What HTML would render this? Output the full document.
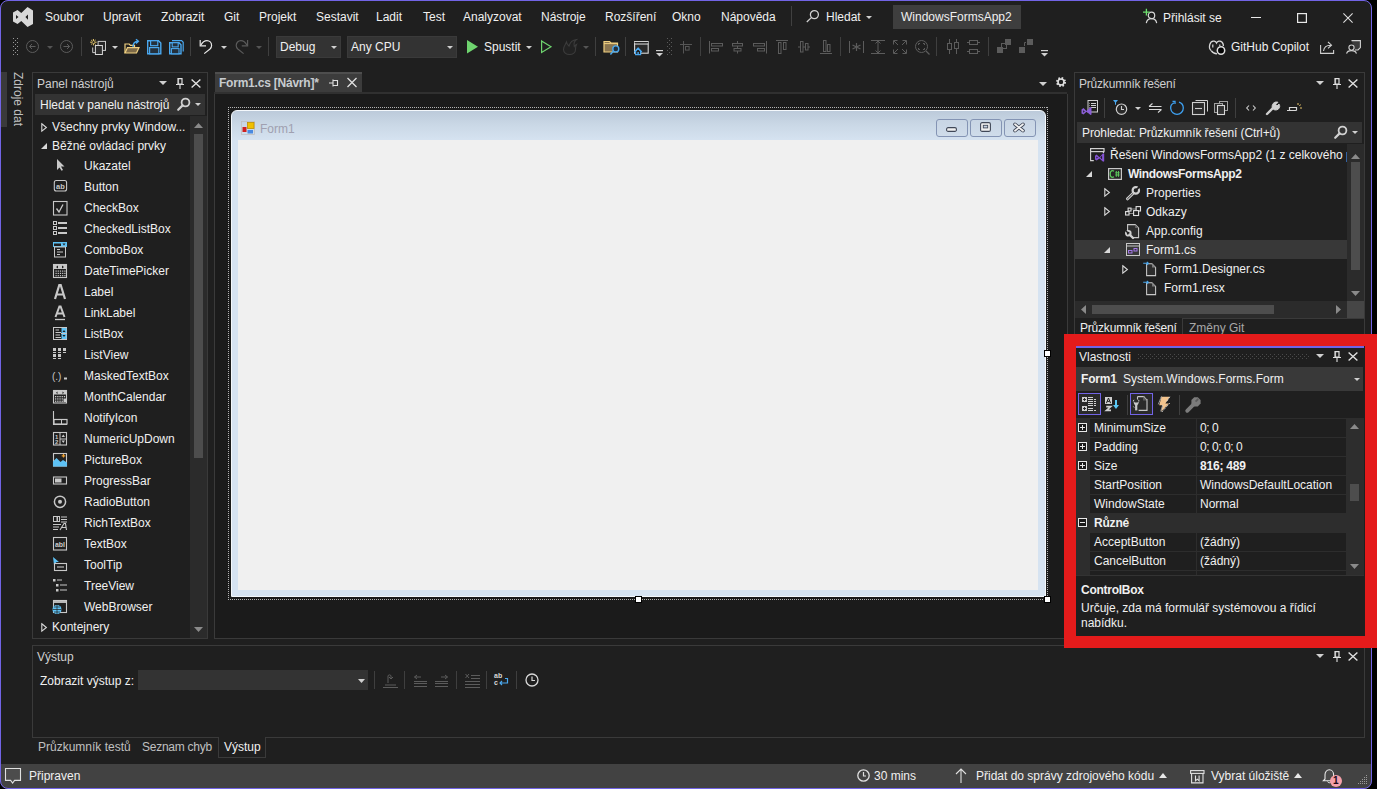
<!DOCTYPE html>
<html><head><meta charset="utf-8">
<style>
*{margin:0;padding:0;box-sizing:border-box}
html,body{width:1377px;height:789px;overflow:hidden;background:#000}
body{font-family:"Liberation Sans",sans-serif;font-size:12px;color:#f0f0f0;position:relative}
.a{position:absolute}
.t{position:absolute;white-space:nowrap;font-size:12px;line-height:16px;color:#f0f0f0}
#win{position:absolute;left:0;top:0;width:1372px;height:789px;background:#1f1f1f;border-radius:8px;overflow:hidden}
#frame{position:absolute;left:0;top:0;width:1372px;height:789px;border:1px solid #7264e6;border-radius:8px;box-shadow:0 0 0 20px #000}
#red{position:absolute;left:1064px;top:334px;width:313px;height:314px;border:12px solid #e41b1b}
svg{position:absolute;overflow:visible}

</style></head><body>
<div id="win">
<svg style="left:13px;top:7px" width="20" height="20" viewBox="0 0 20 20"><path fill-rule="evenodd" fill="#d8d8d8" d="M0 5.5L4.5 3L8.3 6L14.5 0L20 3.5V17L14.5 20L8.3 14L4.5 17L0 14.5Z M3 8L5.5 10L3 12Z M15 7.5L12.4 10L15 12.8Z"/></svg>
<div class="t" style="left:45px;top:9px">Soubor</div>
<div class="t" style="left:103px;top:9px">Upravit</div>
<div class="t" style="left:161px;top:9px">Zobrazit</div>
<div class="t" style="left:224px;top:9px">Git</div>
<div class="t" style="left:259px;top:9px">Projekt</div>
<div class="t" style="left:316px;top:9px">Sestavit</div>
<div class="t" style="left:376px;top:9px">Ladit</div>
<div class="t" style="left:423px;top:9px">Test</div>
<div class="t" style="left:463px;top:9px">Analyzovat</div>
<div class="t" style="left:541px;top:9px">Nástroje</div>
<div class="t" style="left:605px;top:9px">Rozšíření</div>
<div class="t" style="left:672px;top:9px">Okno</div>
<div class="t" style="left:721px;top:9px">Nápověda</div>
<div class="a" style="left:791px;top:6px;width:1px;height:20px;background:#404040;"></div>
<svg style="left:806px;top:10px" width="10" height="12" viewBox="0 0 10 12"><circle cx="8.4" cy="4.6" r="4" fill="none" stroke="#d0d0d0" stroke-width="1.3"/><path d="M5.6 7.4L0.8 12" stroke="#d0d0d0" stroke-width="1.3"/></svg>
<div class="t" style="left:826px;top:9px">Hledat</div>
<svg style="left:866px;top:16px" width="6" height="3" viewBox="0 0 6 3"><path d="M0 0H6L3.0 3Z" fill="#d0d0d0"/></svg>
<div class="a" style="left:893px;top:5px;width:128px;height:24px;background:#3e3e3e;"></div>
<div class="t" style="left:901px;top:9px">WindowsFormsApp2</div>
<svg style="left:1142px;top:8px" width="16" height="16" viewBox="0 0 16 16"><circle cx="9.5" cy="7.4" r="3.2" fill="none" stroke="#d8d8d8" stroke-width="1.2"/><path d="M4.3 15.2C4.8 12 6.8 10.6 9.5 10.6S14.2 12 14.7 15.2" fill="none" stroke="#d8d8d8" stroke-width="1.2"/><path d="M1 4.2H7.8M4.4 0.8V7.6" stroke="#6ee06e" stroke-width="1.3"/></svg>
<div class="t" style="left:1163px;top:10px">Přihlásit se</div>
<div class="a" style="left:1251px;top:17px;width:10px;height:1px;background:#e8e8e8;"></div>
<svg style="left:1297px;top:13px" width="10" height="10" viewBox="0 0 10 10"><rect x="0.6" y="0.6" width="8.8" height="8.8" fill="none" stroke="#e8e8e8" stroke-width="1.2"/></svg>
<svg style="left:1343px;top:13px" width="10" height="10" viewBox="0 0 10 10"><path d="M0.4 0.4L9.6 9.6M9.6 0.4L0.4 9.6" stroke="#e0e0e0" stroke-width="1.05"/></svg>
<svg style="left:13px;top:38px" width="5" height="18" viewBox="0 0 5 18"><rect x="0" y="0" width="1" height="1" fill="#9a9a9a"/><rect x="0" y="4" width="1" height="1" fill="#9a9a9a"/><rect x="0" y="8" width="1" height="1" fill="#9a9a9a"/><rect x="0" y="12" width="1" height="1" fill="#9a9a9a"/><rect x="0" y="16" width="1" height="1" fill="#9a9a9a"/><rect x="4" y="0" width="1" height="1" fill="#9a9a9a"/><rect x="4" y="4" width="1" height="1" fill="#9a9a9a"/><rect x="4" y="8" width="1" height="1" fill="#9a9a9a"/><rect x="4" y="12" width="1" height="1" fill="#9a9a9a"/><rect x="4" y="16" width="1" height="1" fill="#9a9a9a"/><rect x="2" y="2" width="1" height="1" fill="#9a9a9a"/><rect x="2" y="6" width="1" height="1" fill="#9a9a9a"/><rect x="2" y="10" width="1" height="1" fill="#9a9a9a"/><rect x="2" y="14" width="1" height="1" fill="#9a9a9a"/></svg>
<svg style="left:26px;top:40px" width="13" height="13" viewBox="0 0 13 13"><circle cx="6.5" cy="6.5" r="6" fill="none" stroke="#5c5c5c" stroke-width="1"/><path d="M9.5 6.5H3.5M6 4L3.5 6.5L6 9" fill="none" stroke="#5c5c5c" stroke-width="1"/></svg>
<svg style="left:47px;top:46px" width="6" height="3" viewBox="0 0 6 3"><path d="M0 0H6L3.0 3Z" fill="#555"/></svg>
<svg style="left:60px;top:40px" width="13" height="13" viewBox="0 0 13 13"><circle cx="6.5" cy="6.5" r="6" fill="none" stroke="#5c5c5c" stroke-width="1"/><path d="M3.5 6.5H9.5M7 4L9.5 6.5L7 9" fill="none" stroke="#5c5c5c" stroke-width="1"/></svg>
<div class="a" style="left:81px;top:37px;width:1px;height:19px;background:#3f3f3f;"></div>
<div class="a" style="left:190px;top:37px;width:1px;height:19px;background:#3f3f3f;"></div>
<div class="a" style="left:268px;top:37px;width:1px;height:19px;background:#3f3f3f;"></div>
<div class="a" style="left:595px;top:37px;width:1px;height:19px;background:#3f3f3f;"></div>
<div class="a" style="left:625px;top:37px;width:1px;height:19px;background:#3f3f3f;"></div>
<div class="a" style="left:700px;top:37px;width:1px;height:19px;background:#3f3f3f;"></div>
<div class="a" style="left:840px;top:37px;width:1px;height:19px;background:#3f3f3f;"></div>
<div class="a" style="left:936px;top:37px;width:1px;height:19px;background:#3f3f3f;"></div>
<div class="a" style="left:988px;top:37px;width:1px;height:19px;background:#3f3f3f;"></div>
<svg style="left:90px;top:39px" width="17" height="16" viewBox="0 0 17 16"><path d="M3.4 0V2.2M3.4 4.2V6.4M0.2 3.2H2.4M4.4 3.2H6.6M1.2 1L2.6 2.4M4.2 4L5.6 5.4M5.6 1L4.2 2.4M2.6 4L1.2 5.4" stroke="#f0d070" stroke-width="1"/><rect x="8.1" y="2.4" width="7.4" height="9" fill="#262626" stroke="#c8c8c8"/><path d="M2.7 8.5V13.6H5" fill="none" stroke="#c8c8c8"/><rect x="5.4" y="6.5" width="7" height="9" fill="#2c2c2c" stroke="#d8d8d8"/></svg>
<svg style="left:112px;top:46px" width="6" height="3" viewBox="0 0 6 3"><path d="M0 0H6L3.0 3Z" fill="#d0d0d0"/></svg>
<svg style="left:124px;top:39px" width="16" height="15" viewBox="0 0 16 15"><path d="M1 14V5H5.2L6.5 6.4H10.5V8" fill="none" stroke="#f0d080" stroke-width="1.2"/><path d="M1 14L3.5 8.6H15L12.5 14Z" fill="#7d6a48" stroke="#f0d080" stroke-width="1.2"/><path d="M9 8C9 4.5 11 2.2 14.2 2.2M12 0.2L14.4 2.2L12 4.4" fill="none" stroke="#4aa8ef" stroke-width="1.4"/></svg>
<svg style="left:147px;top:40px" width="15" height="15" viewBox="0 0 15 15"><path d="M0.7 0.7H11.5L13.8 3V13.8H0.7Z" fill="#1f1f1f" stroke="#4aa8ef" stroke-width="1.4"/><rect x="3.6" y="0.7" width="7.2" height="5" fill="#24303c" stroke="#4aa8ef" stroke-width="1.2"/><rect x="2.6" y="7.6" width="9.2" height="6.2" fill="#24303c" stroke="#4aa8ef" stroke-width="1.2"/></svg>
<svg style="left:169px;top:40px" width="15" height="15" viewBox="0 0 15 15"><path d="M3 0.7H12.6L14.2 2.3V11.5" fill="none" stroke="#4aa8ef" stroke-width="1.2"/><path d="M0.7 2.7H10L12 4.7V13.8H0.7Z" fill="#1f1f1f" stroke="#4aa8ef" stroke-width="1.4"/><rect x="3.2" y="2.7" width="6" height="4.2" fill="#24303c" stroke="#4aa8ef" stroke-width="1.1"/><rect x="2.4" y="8.6" width="7.6" height="5.2" fill="#24303c" stroke="#4aa8ef" stroke-width="1.1"/></svg>
<svg style="left:199px;top:39px" width="14" height="16" viewBox="0 0 14 16"><path d="M1.2 1V6.9H7" fill="none" stroke="#e8e8e8" stroke-width="1.2"/><path d="M1.8 6.3C3.5 3 5.5 1.6 8 1.6C10.5 1.6 12.6 3.6 12.6 6.5C12.6 8 12 9 11 10L5.2 14.6" fill="none" stroke="#e8e8e8" stroke-width="1.2"/></svg>
<svg style="left:221px;top:46px" width="6" height="3" viewBox="0 0 6 3"><path d="M0 0H6L3.0 3Z" fill="#d0d0d0"/></svg>
<svg style="left:235px;top:39px" width="14" height="16" viewBox="0 0 14 16"><path d="M12.6 1V6.9H6.8" fill="none" stroke="#5a5a5a" stroke-width="1.2"/><path d="M12 6.3C10.3 3 8.3 1.6 5.8 1.6C3.3 1.6 1.2 3.6 1.2 6.5C1.2 8 1.8 9 2.8 10L8.6 14.6" fill="none" stroke="#5a5a5a" stroke-width="1.2"/></svg>
<svg style="left:256px;top:46px" width="6" height="3" viewBox="0 0 6 3"><path d="M0 0H6L3.0 3Z" fill="#555"/></svg>
<div class="a" style="left:276px;top:36px;width:65px;height:22px;background:#333333;border:1px solid #3a3a3a"></div>
<div class="t" style="left:280px;top:39px">Debug</div>
<svg style="left:331px;top:46px" width="6" height="3" viewBox="0 0 6 3"><path d="M0 0H6L3.0 3Z" fill="#d0d0d0"/></svg>
<div class="a" style="left:347px;top:36px;width:110px;height:22px;background:#333333;border:1px solid #3a3a3a"></div>
<div class="t" style="left:351px;top:39px">Any CPU</div>
<svg style="left:447px;top:46px" width="6" height="3" viewBox="0 0 6 3"><path d="M0 0H6L3.0 3Z" fill="#d0d0d0"/></svg>
<svg style="left:467px;top:40px" width="11" height="14" viewBox="0 0 11 14"><path d="M0 0L11 6.7L0 13.4Z" fill="#6fd46f"/></svg>
<div class="t" style="left:484px;top:39px">Spustit</div>
<svg style="left:526px;top:46px" width="6" height="3" viewBox="0 0 6 3"><path d="M0 0H6L3.0 3Z" fill="#d0d0d0"/></svg>
<svg style="left:541px;top:40px" width="11" height="14" viewBox="0 0 11 14"><path d="M0.6 0.9L10 6.7L0.6 12.5Z" fill="none" stroke="#6fd46f" stroke-width="1.2"/></svg>
<svg style="left:563px;top:39px" width="14" height="16" viewBox="0 0 14 16"><path d="M2 6C1 7.5 0.5 9 0.5 10.5C0.5 13.5 3 15.5 6.5 15.5C10 15.5 12.5 13.5 12.5 10.5C12.5 9 12.5 7.5 13.5 5.5C12.5 6 11.8 6.8 11.3 7.5C10.8 5.5 10.8 2.5 13.5 0.5C9.5 1 7 3.5 6 7C5 6 4 5.5 3.5 3C3 4 2.5 5 2 6Z" fill="#222" stroke="#3c3c3c" stroke-width="1.1"/></svg>
<svg style="left:583px;top:46px" width="6" height="3" viewBox="0 0 6 3"><path d="M0 0H6L3.0 3Z" fill="#555"/></svg>
<svg style="left:603px;top:40px" width="17" height="16" viewBox="0 0 17 16"><path d="M1 12V1.5H6.5L8 3H14.5V12Z" fill="#8a7550" stroke="#f0d080" stroke-width="1.2"/><path d="M1 3.6H14" stroke="#f0d080" stroke-width="1"/><circle cx="12.8" cy="8.9" r="3" fill="#24303c" stroke="#4aa8ef" stroke-width="1.4"/><path d="M10.6 11.1L7.4 14.6" stroke="#4aa8ef" stroke-width="1.5"/></svg>
<svg style="left:634px;top:41px" width="15" height="15" viewBox="0 0 15 15"><rect x="0.6" y="0.6" width="13.6" height="11.6" fill="#2a2a2a" stroke="#d8d8d8" stroke-width="1.1"/><path d="M0.6 3H14.2" stroke="#d8d8d8" stroke-width="1.1"/><path d="M0.6 1.6H14.2" stroke="#1f1f1f" stroke-width="1"/><path d="M1.6 10V13.6H6.6V10L4.1 7.4Z" fill="#1f1f1f" stroke="#4aa8ef" stroke-width="1.2"/><path d="M0.4 11L4.1 7.2L7.8 11" fill="none" stroke="#4aa8ef" stroke-width="1.2"/><rect x="3.4" y="11" width="1.4" height="2.6" fill="#4aa8ef"/></svg>
<svg style="left:656px;top:50px" width="7" height="7" viewBox="0 0 7 7"><rect x="0" y="0" width="7" height="1.2" fill="#d0d0d0"/><path d="M0 3H7L3.5 6.5Z" fill="#d0d0d0"/></svg>
<svg style="left:667px;top:38px" width="5" height="18" viewBox="0 0 5 18"><rect x="0" y="0" width="1" height="1" fill="#5a5a5a"/><rect x="0" y="4" width="1" height="1" fill="#5a5a5a"/><rect x="0" y="8" width="1" height="1" fill="#5a5a5a"/><rect x="0" y="12" width="1" height="1" fill="#5a5a5a"/><rect x="0" y="16" width="1" height="1" fill="#5a5a5a"/><rect x="4" y="0" width="1" height="1" fill="#5a5a5a"/><rect x="4" y="4" width="1" height="1" fill="#5a5a5a"/><rect x="4" y="8" width="1" height="1" fill="#5a5a5a"/><rect x="4" y="12" width="1" height="1" fill="#5a5a5a"/><rect x="4" y="16" width="1" height="1" fill="#5a5a5a"/><rect x="2" y="2" width="1" height="1" fill="#5a5a5a"/><rect x="2" y="6" width="1" height="1" fill="#5a5a5a"/><rect x="2" y="10" width="1" height="1" fill="#5a5a5a"/><rect x="2" y="14" width="1" height="1" fill="#5a5a5a"/></svg>
<svg style="left:680px;top:41px" width="13" height="13" viewBox="0 0 13 13"><path d="M0 3.5H12M3.5 0V12.5" stroke="#555"/><rect x="5.5" y="5.5" width="3.6" height="3.6" fill="none" stroke="#555"/></svg>
<svg style="left:709px;top:41px" width="15" height="13" viewBox="0 0 15 13"><path d="M0.5 0V12.5" stroke="#5c5c5c"/><rect x="2.5" y="2.5" width="11" height="2.5" fill="none" stroke="#5c5c5c"/><rect x="2.5" y="7.5" width="7" height="2.5" fill="none" stroke="#5c5c5c"/></svg>
<svg style="left:731px;top:41px" width="13" height="13" viewBox="0 0 13 13"><path d="M6.5 0V12.5" stroke="#5c5c5c"/><rect x="1.5" y="2.5" width="10" height="2.5" fill="#1f1f1f" stroke="#5c5c5c"/><rect x="3" y="7.5" width="7" height="2.5" fill="#1f1f1f" stroke="#5c5c5c"/></svg>
<svg style="left:753px;top:41px" width="15" height="13" viewBox="0 0 15 13"><path d="M13.5 0V12.5" stroke="#5c5c5c"/><rect x="0.5" y="2.5" width="11" height="2.5" fill="none" stroke="#5c5c5c"/><rect x="4.5" y="7.5" width="7" height="2.5" fill="none" stroke="#5c5c5c"/></svg>
<svg style="left:776px;top:40px" width="13" height="14" viewBox="0 0 13 14"><path d="M0 0.5H12" stroke="#5c5c5c"/><rect x="2.5" y="2.5" width="2.5" height="11" fill="none" stroke="#5c5c5c"/><rect x="7.5" y="2.5" width="2.5" height="7" fill="none" stroke="#5c5c5c"/></svg>
<svg style="left:798px;top:41px" width="13" height="12" viewBox="0 0 13 12"><path d="M0 6H12" stroke="#5c5c5c"/><rect x="2.5" y="0.5" width="2.5" height="10.5" fill="#1f1f1f" stroke="#5c5c5c"/><rect x="7.5" y="2.5" width="2.5" height="6.5" fill="#1f1f1f" stroke="#5c5c5c"/></svg>
<svg style="left:820px;top:40px" width="13" height="14" viewBox="0 0 13 14"><path d="M0 13.5H12" stroke="#5c5c5c"/><rect x="3.5" y="0.5" width="2.5" height="11" fill="none" stroke="#5c5c5c"/><rect x="7.5" y="4.5" width="2.5" height="7" fill="none" stroke="#5c5c5c"/></svg>
<svg style="left:849px;top:40px" width="15" height="14" viewBox="0 0 15 14"><path d="M0.5 1V13M14.5 1V13" stroke="#5c5c5c"/><path d="M7.5 3V11M3.5 5L11.5 9M11.5 5L3.5 9" stroke="#5c5c5c" stroke-width="1.2"/></svg>
<svg style="left:871px;top:40px" width="14" height="14" viewBox="0 0 14 14"><path d="M0 0.5H14M0 13.5H14M7 1V13M4.5 3.5L7 1L9.5 3.5M4.5 10.5L7 13L9.5 10.5" fill="none" stroke="#5c5c5c"/></svg>
<svg style="left:893px;top:40px" width="14" height="14" viewBox="0 0 14 14"><path d="M0.5 4.5V0.5H4.5M9.5 0.5H13.5V4.5M13.5 9.5V13.5H9.5M4.5 13.5H0.5V9.5M1 1L5 5M13 1L9 5M13 13L9 9M1 13L5 9" fill="none" stroke="#5c5c5c"/></svg>
<svg style="left:915px;top:40px" width="15" height="15" viewBox="0 0 15 15"><circle cx="6.5" cy="6.5" r="6" fill="none" stroke="#5c5c5c"/><path d="M11 11L14.5 14.5" stroke="#5c5c5c" stroke-width="1.2"/><path d="M3.5 5V3.5H5M8 3.5H9.5V5M9.5 8V9.5H8M5 9.5H3.5V8" fill="none" stroke="#5c5c5c"/></svg>
<svg style="left:947px;top:39px" width="12" height="15" viewBox="0 0 12 15"><path d="M2.5 0V15M9.5 0V15" stroke="#5c5c5c"/><rect x="0.5" y="4.5" width="4" height="6" fill="#1f1f1f" stroke="#5c5c5c"/><rect x="7.5" y="3.5" width="4" height="6" fill="#1f1f1f" stroke="#5c5c5c"/></svg>
<svg style="left:967px;top:40px" width="13" height="14" viewBox="0 0 13 14"><path d="M0 2.5H13M0 11.5H13" stroke="#5c5c5c"/><rect x="2.5" y="0.5" width="8" height="4" fill="#1f1f1f" stroke="#5c5c5c"/><rect x="2.5" y="9.5" width="8" height="4" fill="#1f1f1f" stroke="#5c5c5c"/></svg>
<svg style="left:997px;top:39px" width="14" height="14" viewBox="0 0 14 14"><rect x="0" y="8" width="6" height="6" fill="#5c5c5c"/><rect x="8" y="0" width="6" height="6" fill="#5c5c5c"/><rect x="4.5" y="4.5" width="5" height="5" fill="none" stroke="#5c5c5c"/></svg>
<svg style="left:1019px;top:39px" width="14" height="14" viewBox="0 0 14 14"><rect x="0" y="8" width="6" height="6" fill="#5c5c5c"/><rect x="8" y="0" width="6" height="6" fill="#5c5c5c"/><path d="M5.5 7V3.5H7" fill="none" stroke="#5c5c5c"/></svg>
<svg style="left:1041px;top:50px" width="7" height="7" viewBox="0 0 7 7"><rect x="0" y="0" width="7" height="1.2" fill="#d0d0d0"/><path d="M0 3H7L3.5 6.5Z" fill="#d0d0d0"/></svg>
<svg style="left:1209px;top:40px" width="17" height="15" viewBox="0 0 17 15"><path d="M2 10.5C0.3 9 0.2 6.5 0.8 4.5C1.5 2 3.5 0.8 5.3 1.2C6.5 1.5 7.2 2.3 7.5 3C7.9 2.3 8.7 1.5 9.9 1.2C11.8 0.8 13.5 2 14.2 4.3L14.4 6" fill="#1f1f1f" stroke="#d8d8d8" stroke-width="1.3"/><path d="M2.2 10.6C3.5 12.5 5.5 13.6 8 13.8" fill="none" stroke="#d8d8d8" stroke-width="1.3"/><path d="M3.8 4.5V7.5M10.8 4.5V6" stroke="#d8d8d8" stroke-width="1.2"/><circle cx="12" cy="10.5" r="3.7" fill="#050505" stroke="#e0e0e0" stroke-width="1.5"/></svg>
<div class="t" style="left:1231px;top:39px">GitHub Copilot</div>
<svg style="left:1320px;top:41px" width="15" height="13" viewBox="0 0 15 13"><path d="M0.6 4V12.4H13.6V9" fill="none" stroke="#d0d0d0" stroke-width="1.1"/><path d="M3.5 10C4 6.5 6.5 4.2 10.5 4.2M8 1L11.5 4.2L8 7.4" fill="none" stroke="#d0d0d0" stroke-width="1.1"/></svg>
<svg style="left:1346px;top:40px" width="15" height="14" viewBox="0 0 15 14"><path d="M5.5 0.6H14.4V7.6L12 10H9" fill="#3a3a3a" stroke="#d0d0d0" stroke-width="1.1"/><circle cx="5.5" cy="7.6" r="2.6" fill="#1f1f1f" stroke="#d0d0d0" stroke-width="1.1"/><path d="M0.6 13.6C1 11 3 10.6 5.5 10.6S10 11 10.4 13.6" fill="#1f1f1f" stroke="#d0d0d0" stroke-width="1.1"/></svg>
<div class="a" style="left:1px;top:72px;width:6px;height:55px;background:#3a3a3a;"></div>
<div class="t" style="left:-8px;top:90px;width:52px;transform:rotate(90deg);color:#c0c0c0;transform-origin:26px 8px">Zdroje dat</div>
<div class="a" style="left:32px;top:72px;width:176px;height:567px;border:1px solid #3a3a3a"></div>
<div class="t" style="left:37px;top:76px;color:#cfcfcf">Panel nástrojů</div>
<svg style="left:159px;top:81px" width="8" height="4" viewBox="0 0 8 4"><path d="M0 0H8L4.0 4Z" fill="#d0d0d0"/></svg>
<svg style="left:176px;top:78px" width="8" height="11" viewBox="0 0 8 11"><path d="M2 0.6H6V6.2H2Z" fill="none" stroke="#e0e0e0" stroke-width="1.2"/><path d="M2.6 1V6" stroke="#e0e0e0" stroke-width="0.8"/><path d="M0 6.5H8M4 6.5V11" fill="none" stroke="#e0e0e0" stroke-width="1.1"/></svg>
<svg style="left:191px;top:79px" width="10" height="9" viewBox="0 0 10 9"><path d="M0.6 0.5L9.4 8.5M9.4 0.5L0.6 8.5" stroke="#e0e0e0" stroke-width="1.4"/></svg>
<div class="a" style="left:35px;top:94px;width:170px;height:21px;background:#333333;"></div>
<div class="t" style="left:40px;top:97px">Hledat v panelu nástrojů</div>
<svg style="left:177px;top:98px" width="13" height="13" viewBox="0 0 13 13"><circle cx="8.5" cy="4.5" r="3.9" fill="none" stroke="#d0d0d0" stroke-width="1.8"/><path d="M5.6 7.4L1.2 11.8" stroke="#d0d0d0" stroke-width="2.2" stroke-linecap="round"/></svg>
<svg style="left:195px;top:103px" width="6" height="3" viewBox="0 0 6 3"><path d="M0 0H6L3.0 3Z" fill="#d0d0d0"/></svg>
<div class="a" style="left:190px;top:116px;width:17px;height:522px;background:#2b2b2b;"></div>
<svg style="left:194px;top:123px" width="9" height="5" viewBox="0 0 9 5"><path d="M0 5H9L4.5 0Z" fill="#8a8a8a"/></svg>
<div class="a" style="left:194px;top:134px;width:9px;height:324px;background:#4d4d4d;"></div>
<svg style="left:194px;top:627px" width="9" height="5" viewBox="0 0 9 5"><path d="M0 0H9L4.5 5Z" fill="#8a8a8a"/></svg>
<svg style="left:41px;top:123px" width="6" height="9" viewBox="0 0 6 9"><path d="M0.8 0.8L5.4 4.5L0.8 8.2Z" fill="none" stroke="#d8d8d8" stroke-width="1.1"/></svg>
<div class="t" style="left:52px;top:119px">Všechny prvky Window...</div>
<svg style="left:41px;top:143px" width="6" height="6" viewBox="0 0 6 6"><path d="M6 0V6H0Z" fill="#d8d8d8"/></svg>
<div class="t" style="left:52px;top:138px">Běžné ovládací prvky</div>
<svg style="left:52px;top:158px" width="16" height="16" viewBox="0 0 16 16"><path d="M5 1L12.5 8.5H9L11 12L9.5 12.8L7.5 9.5L5 12Z" fill="#c8c8c8"/></svg>
<div class="t" style="left:84px;top:158px">Ukazatel</div>
<svg style="left:52px;top:179px" width="16" height="16" viewBox="0 0 16 16"><rect x="2.3" y="1.5" width="12.3" height="10.5" rx="2" fill="none" stroke="#c8c8c8" stroke-width="1.1"/><text x="8.5" y="9.8" font-size="7.5" font-family="Liberation Sans" font-weight="bold" fill="#c8c8c8" text-anchor="middle">ab</text></svg>
<div class="t" style="left:84px;top:179px">Button</div>
<svg style="left:52px;top:200px" width="16" height="16" viewBox="0 0 16 16"><rect x="1.5" y="1.5" width="13.5" height="13.5" fill="none" stroke="#c8c8c8" stroke-width="1.1"/><path d="M4.5 8.5L7 12L11 4.5" fill="none" stroke="#c8c8c8" stroke-width="1.3"/></svg>
<div class="t" style="left:84px;top:200px">CheckBox</div>
<svg style="left:52px;top:221px" width="16" height="16" viewBox="0 0 16 16"><rect x="1.5" y="0.5" width="3" height="3" fill="none" stroke="#c8c8c8"/><rect x="1.5" y="5.5" width="3" height="3" fill="none" stroke="#c8c8c8"/><rect x="1.5" y="10.5" width="3" height="3" fill="none" stroke="#c8c8c8"/><path d="M6 2H15M6 7H15M6 12H15" stroke="#c8c8c8" stroke-width="1.8"/></svg>
<div class="t" style="left:84px;top:221px">CheckedListBox</div>
<svg style="left:52px;top:242px" width="16" height="16" viewBox="0 0 16 16"><rect x="1" y="0" width="14" height="5" fill="#5ec2f5"/><rect x="2" y="1.5" width="7" height="2.5" fill="#1f1f1f"/><path d="M10.5 1.5H13.5L12 3.5Z" fill="#1f1f1f"/><rect x="2.5" y="5" width="11" height="10" fill="none" stroke="#c8c8c8"/><path d="M5 7.5H8M5 10H11M5 12.5H8" stroke="#c8c8c8"/></svg>
<div class="t" style="left:84px;top:242px">ComboBox</div>
<svg style="left:52px;top:263px" width="16" height="16" viewBox="0 0 16 16"><rect x="1.5" y="1.5" width="13" height="13" fill="none" stroke="#c8c8c8" stroke-width="1.1"/><rect x="2" y="2" width="12" height="4" fill="#c8c8c8"/><path d="M4 4L6 2.5V5.5ZM12 4L10 2.5V5.5Z" fill="#1f1f1f"/><rect x="3.5" y="7.5" width="1.2" height="1.2" fill="#c8c8c8"/><rect x="3.5" y="9.8" width="1.2" height="1.2" fill="#c8c8c8"/><rect x="3.5" y="12.1" width="1.2" height="1.2" fill="#c8c8c8"/><rect x="5.7" y="7.5" width="1.2" height="1.2" fill="#c8c8c8"/><rect x="5.7" y="9.8" width="1.2" height="1.2" fill="#c8c8c8"/><rect x="5.7" y="12.1" width="1.2" height="1.2" fill="#c8c8c8"/><rect x="7.9" y="7.5" width="1.2" height="1.2" fill="#c8c8c8"/><rect x="7.9" y="9.8" width="1.2" height="1.2" fill="#c8c8c8"/><rect x="7.9" y="12.1" width="1.2" height="1.2" fill="#c8c8c8"/><rect x="10.100000000000001" y="7.5" width="1.2" height="1.2" fill="#c8c8c8"/><rect x="10.100000000000001" y="9.8" width="1.2" height="1.2" fill="#c8c8c8"/><rect x="10.100000000000001" y="12.1" width="1.2" height="1.2" fill="#c8c8c8"/><rect x="12.3" y="7.5" width="1.2" height="1.2" fill="#c8c8c8"/><rect x="12.3" y="9.8" width="1.2" height="1.2" fill="#c8c8c8"/><rect x="12.3" y="12.1" width="1.2" height="1.2" fill="#c8c8c8"/></svg>
<div class="t" style="left:84px;top:263px">DateTimePicker</div>
<svg style="left:52px;top:284px" width="16" height="16" viewBox="0 0 16 16"><path d="M3 15L7.3 1H8.7L13 15M4.6 10.5H11.4" fill="none" stroke="#c8c8c8" stroke-width="2.2"/></svg>
<div class="t" style="left:84px;top:284px">Label</div>
<svg style="left:52px;top:305px" width="16" height="16" viewBox="0 0 16 16"><path d="M3.5 12L7.4 1.5H8.6L12.5 12M5 8.5H11" fill="none" stroke="#c8c8c8" stroke-width="2"/><path d="M3 14.5H13" stroke="#c8c8c8" stroke-width="1.3"/></svg>
<div class="t" style="left:84px;top:305px">LinkLabel</div>
<svg style="left:52px;top:326px" width="16" height="16" viewBox="0 0 16 16"><rect x="1.5" y="1.5" width="13" height="12" fill="none" stroke="#c8c8c8"/><path d="M3.5 4H7M3.5 6.5H9M3.5 9H8M3.5 11.5H9" stroke="#c8c8c8" stroke-width="1.1"/><rect x="9.5" y="2" width="5" height="5" fill="#5ec2f5"/><rect x="9.5" y="8" width="5" height="5" fill="#5ec2f5"/><path d="M10.5 6L12 4L13.5 6ZM10.5 9L12 11L13.5 9Z" fill="#1f1f1f"/><path d="M9 7.5H15" stroke="#c8c8c8"/></svg>
<div class="t" style="left:84px;top:326px">ListBox</div>
<svg style="left:52px;top:347px" width="16" height="16" viewBox="0 0 16 16"><rect x="1" y="1" width="3" height="3" fill="#c8c8c8"/><rect x="1" y="7" width="3" height="3" fill="#c8c8c8"/><rect x="6" y="1" width="3" height="3" fill="#c8c8c8"/><rect x="6" y="7" width="3" height="3" fill="#c8c8c8"/><rect x="11" y="1" width="3" height="3" fill="#c8c8c8"/><path d="M1 5.5H4M6 5.5H9M11 5.5H14M1 11.5H4M6 11.5H9" stroke="#c8c8c8"/></svg>
<div class="t" style="left:84px;top:347px">ListView</div>
<svg style="left:52px;top:368px" width="16" height="16" viewBox="0 0 16 16"><text x="0" y="11.5" font-size="10" font-family="Liberation Sans" fill="#c8c8c8">(.)</text><rect x="12" y="9.5" width="3" height="2" fill="#c8c8c8"/></svg>
<div class="t" style="left:84px;top:368px">MaskedTextBox</div>
<svg style="left:52px;top:389px" width="16" height="16" viewBox="0 0 16 16"><rect x="1.5" y="1.5" width="13" height="12.5" fill="none" stroke="#c8c8c8" stroke-width="1.1"/><rect x="2" y="2" width="12" height="3.5" fill="#c8c8c8"/><path d="M4 3.7L5.5 2.5V5ZM12 3.7L10.5 2.5V5Z" fill="#1f1f1f"/><rect x="3.0" y="7.0" width="1.3" height="1.3" fill="#c8c8c8"/><rect x="3.0" y="9.3" width="1.3" height="1.3" fill="#c8c8c8"/><rect x="3.0" y="11.6" width="1.3" height="1.3" fill="#c8c8c8"/><rect x="5.2" y="7.0" width="1.3" height="1.3" fill="#c8c8c8"/><rect x="5.2" y="9.3" width="1.3" height="1.3" fill="#c8c8c8"/><rect x="5.2" y="11.6" width="1.3" height="1.3" fill="#c8c8c8"/><rect x="7.4" y="7.0" width="1.3" height="1.3" fill="#c8c8c8"/><rect x="7.4" y="9.3" width="1.3" height="1.3" fill="#c8c8c8"/><rect x="7.4" y="11.6" width="1.3" height="1.3" fill="#c8c8c8"/><rect x="9.600000000000001" y="7.0" width="1.3" height="1.3" fill="#c8c8c8"/><rect x="9.600000000000001" y="9.3" width="1.3" height="1.3" fill="#c8c8c8"/><rect x="9.600000000000001" y="11.6" width="1.3" height="1.3" fill="#c8c8c8"/><rect x="11.8" y="7.0" width="1.3" height="1.3" fill="#c8c8c8"/><rect x="11.5" y="9.5" width="2.5" height="3.5" fill="#c8c8c8"/></svg>
<div class="t" style="left:84px;top:389px">MonthCalendar</div>
<svg style="left:52px;top:410px" width="16" height="16" viewBox="0 0 16 16"><path d="M1.5 1V14.5H15" fill="none" stroke="#c8c8c8" stroke-width="1.1"/><rect x="2" y="9.5" width="13" height="4.5" fill="none" stroke="#c8c8c8" stroke-width="1.2"/><path d="M9.5 9.5V14" stroke="#c8c8c8"/></svg>
<div class="t" style="left:84px;top:410px">NotifyIcon</div>
<svg style="left:52px;top:431px" width="16" height="16" viewBox="0 0 16 16"><rect x="1.5" y="1.5" width="13" height="12.5" fill="none" stroke="#c8c8c8" stroke-width="1.1"/><text x="3" y="7.5" font-size="6" font-weight="bold" font-family="Liberation Sans" fill="#c8c8c8">1</text><text x="3" y="13" font-size="6" font-weight="bold" font-family="Liberation Sans" fill="#c8c8c8">2</text><path d="M8 2V14M8 8H14" stroke="#c8c8c8"/><path d="M9.5 6L11.3 3.5L13 6ZM9.5 9.5L11.3 12L13 9.5Z" fill="#c8c8c8"/></svg>
<div class="t" style="left:84px;top:431px">NumericUpDown</div>
<svg style="left:52px;top:452px" width="16" height="16" viewBox="0 0 16 16"><rect x="1.5" y="1.5" width="13" height="12.5" fill="#222" stroke="#c8c8c8" stroke-width="1.1"/><path d="M1 14.5V9.5L4.5 6L8.5 10L11 8L15 10.5V14.5Z" fill="#5ec2f5"/><path d="M11.5 2V5.6M9.7 3.8H13.3" stroke="#f0a030" stroke-width="1.2"/></svg>
<div class="t" style="left:84px;top:452px">PictureBox</div>
<svg style="left:52px;top:473px" width="16" height="16" viewBox="0 0 16 16"><rect x="1.5" y="4" width="13" height="7" fill="none" stroke="#c8c8c8" stroke-width="1.1"/><rect x="3" y="5.5" width="6.5" height="4" fill="#c8c8c8"/></svg>
<div class="t" style="left:84px;top:473px">ProgressBar</div>
<svg style="left:52px;top:494px" width="16" height="16" viewBox="0 0 16 16"><circle cx="8" cy="7.8" r="5.6" fill="none" stroke="#c8c8c8" stroke-width="1.5"/><circle cx="8" cy="7.8" r="2" fill="#c8c8c8"/></svg>
<div class="t" style="left:84px;top:494px">RadioButton</div>
<svg style="left:52px;top:515px" width="16" height="16" viewBox="0 0 16 16"><rect x="1.5" y="1.5" width="3.5" height="5" fill="none" stroke="#c8c8c8"/><rect x="5.5" y="1.5" width="2" height="5" fill="none" stroke="#c8c8c8"/><path d="M9 2H15M9 4.5H15M9 7H15M1 9.5H9M1 12H7M1 14.5H6" stroke="#c8c8c8" stroke-width="1.1"/><path d="M8 15L12 8.5H13.5L14.5 15M10 12.5H14" fill="none" stroke="#c8c8c8" stroke-width="1.1"/></svg>
<div class="t" style="left:84px;top:515px">RichTextBox</div>
<svg style="left:52px;top:536px" width="16" height="16" viewBox="0 0 16 16"><rect x="1.5" y="1.5" width="13" height="12.5" fill="none" stroke="#c8c8c8" stroke-width="1.1"/><text x="8" y="10.5" font-size="7" font-weight="bold" font-family="Liberation Sans" fill="#c8c8c8" text-anchor="middle">abl</text></svg>
<div class="t" style="left:84px;top:536px">TextBox</div>
<svg style="left:52px;top:557px" width="16" height="16" viewBox="0 0 16 16"><path d="M1 0L7 5H4.5L2 8Z" fill="#5ec2f5"/><rect x="2.5" y="6.5" width="12" height="7" fill="none" stroke="#c8c8c8" stroke-width="1.1"/><path d="M5 10H12" stroke="#c8c8c8" stroke-width="1.1"/></svg>
<div class="t" style="left:84px;top:557px">ToolTip</div>
<svg style="left:52px;top:578px" width="16" height="16" viewBox="0 0 16 16"><rect x="1" y="1" width="2.5" height="2.5" fill="#c8c8c8"/><path d="M5 2H10" stroke="#c8c8c8"/><rect x="4" y="6" width="2.5" height="2.5" fill="#c8c8c8"/><path d="M8 7H15" stroke="#c8c8c8"/><rect x="4" y="11" width="2.5" height="2.5" fill="#c8c8c8"/><path d="M8 12H15" stroke="#c8c8c8"/></svg>
<div class="t" style="left:84px;top:578px">TreeView</div>
<svg style="left:52px;top:599px" width="16" height="16" viewBox="0 0 16 16"><rect x="1.5" y="1.5" width="13" height="12" fill="none" stroke="#c8c8c8" stroke-width="1.1"/><path d="M1.5 3H14.5" stroke="#c8c8c8" stroke-width="1.8"/><circle cx="5" cy="10.5" r="4.5" fill="#5ec2f5"/><path d="M0.5 10.5H9.5M5 6V15M2 8H8M2 13H8" stroke="#1f1f1f" stroke-width="0.7"/></svg>
<div class="t" style="left:84px;top:599px">WebBrowser</div>
<svg style="left:41px;top:623px" width="6" height="9" viewBox="0 0 6 9"><path d="M0.8 0.8L5.4 4.5L0.8 8.2Z" fill="none" stroke="#d8d8d8" stroke-width="1.1"/></svg>
<div class="t" style="left:52px;top:619px">Kontejnery</div>
<div class="a" style="left:215px;top:72px;width:147px;height:20px;background:#3c3c3c;"></div>
<div class="a" style="left:215px;top:72px;width:147px;height:2px;background:#4e4e4e;"></div>
<div class="t" style="left:219px;top:75px;color:#c8ccd0;font-weight:bold;letter-spacing:-0.22px">Form1.cs [Návrh]*</div>
<svg style="left:329px;top:79px" width="9" height="8" viewBox="0 0 9 8"><path d="M0 4H4M4 0.5V7.5M4 1.5H8.5V6.5H4" fill="none" stroke="#e0e0e0" stroke-width="1.1"/></svg>
<svg style="left:347px;top:78px" width="10" height="9" viewBox="0 0 10 9"><path d="M0.5 0L9.5 9M9.5 0L0.5 9" stroke="#e0e0e0" stroke-width="1.3"/></svg>
<div class="a" style="left:214px;top:94px;width:854px;height:545px;background:#1b1b1b;border:1px solid #3a3a3a;border-top:none"></div>
<div class="a" style="left:214px;top:92px;width:853px;height:2px;background:#303030;"></div>
<svg style="left:1039px;top:82px" width="8" height="4" viewBox="0 0 8 4"><path d="M0 0H8L4.0 4Z" fill="#d0d0d0"/></svg>
<svg style="left:1055px;top:76px" width="12" height="12" viewBox="0 0 12 12"><circle cx="6" cy="6" r="3.8" fill="none" stroke="#e0e0e0" stroke-width="2.4" stroke-dasharray="1.5 1.5"/><circle cx="6" cy="6" r="3" fill="none" stroke="#e0e0e0" stroke-width="1.6"/></svg>
<div class="a" style="left:228px;top:107px;width:820px;height:1px;background:repeating-linear-gradient(90deg,#b4b4b4 0 1px,transparent 1px 2px);"></div>
<div class="a" style="left:228px;top:599px;width:820px;height:1px;background:repeating-linear-gradient(90deg,#b4b4b4 0 1px,transparent 1px 2px);"></div>
<div class="a" style="left:228px;top:107px;width:1px;height:493px;background:repeating-linear-gradient(180deg,#b4b4b4 0 1px,transparent 1px 2px);"></div>
<div class="a" style="left:1047px;top:107px;width:1px;height:493px;background:repeating-linear-gradient(180deg,#b4b4b4 0 1px,transparent 1px 2px);"></div>
<div class="a" style="left:231px;top:110px;width:815px;height:487px;border-radius:6px 6px 0 0;background:linear-gradient(#bccada 0px,#cad8e6 14px,#d6e3f1 30px,#d6e3f1 100%);border:1px solid #f4f8fc"></div>
<div class="a" style="left:238px;top:140px;width:800px;height:450px;background:#f0f0f0;"></div>
<svg style="left:241px;top:121px" width="14" height="14" viewBox="0 0 14 14"><rect x="0.5" y="0.5" width="13" height="13" fill="none" stroke="#c0c0c0" stroke-width="0.8"/><rect x="6.5" y="1.5" width="6.5" height="6" fill="#f0c000" stroke="#c09000" stroke-width="0.8"/><rect x="1.5" y="6" width="4" height="5" fill="#d02020"/><rect x="6.5" y="9" width="5.5" height="3.5" fill="#4a8ae0"/></svg>
<div class="t" style="left:260px;top:121px;color:#a0a0b0">Form1</div>
<div class="a" style="left:936px;top:119px;width:32px;height:18px;border:1px solid #8494b4;border-radius:3px;background:linear-gradient(#c8d5e4,#cfdcea)"></div>
<div class="a" style="left:970px;top:119px;width:32px;height:18px;border:1px solid #8494b4;border-radius:3px;background:linear-gradient(#c8d5e4,#cfdcea)"></div>
<div class="a" style="left:1004px;top:119px;width:32px;height:18px;border:1px solid #8494b4;border-radius:3px;background:linear-gradient(#c8d5e4,#cfdcea)"></div>
<svg style="left:946px;top:127px" width="11" height="5" viewBox="0 0 11 5"><rect x="0.6" y="0.6" width="9.8" height="3.8" rx="1.5" fill="#f0f0f0" stroke="#404858" stroke-width="1.1"/></svg>
<svg style="left:980px;top:122px" width="11" height="10" viewBox="0 0 11 10"><rect x="0.6" y="0.6" width="9.8" height="8.8" rx="1.5" fill="#f0f0f0" stroke="#404858" stroke-width="1.1"/><rect x="3.3" y="3.3" width="4.4" height="2.6" fill="#c8d4e4" stroke="#404858" stroke-width="0.9"/></svg>
<svg style="left:1013px;top:123px" width="12" height="9" viewBox="0 0 12 9"><path d="M2 1.3L10 7.7M10 1.3L2 7.7" stroke="#404858" stroke-width="3.6" stroke-linecap="round"/><path d="M2 1.3L10 7.7M10 1.3L2 7.7" stroke="#f4f4f4" stroke-width="1.8" stroke-linecap="round"/></svg>
<div class="a" style="left:1044px;top:350px;width:7px;height:7px;background:#ffffff;border:1px solid #000"></div>
<div class="a" style="left:635px;top:596px;width:7px;height:7px;background:#ffffff;border:1px solid #000"></div>
<div class="a" style="left:1044px;top:596px;width:7px;height:7px;background:#ffffff;border:1px solid #000"></div>
<div class="a" style="left:1074px;top:72px;width:291px;height:270px;border:1px solid #3a3a3a"></div>
<div class="t" style="left:1079px;top:76px;color:#cfcfcf;letter-spacing:-0.2px">Průzkumník řešení</div>
<svg style="left:1316px;top:81px" width="8" height="4" viewBox="0 0 8 4"><path d="M0 0H8L4.0 4Z" fill="#d0d0d0"/></svg>
<svg style="left:1333px;top:78px" width="8" height="11" viewBox="0 0 8 11"><path d="M2 0.6H6V6.2H2Z" fill="none" stroke="#e0e0e0" stroke-width="1.2"/><path d="M2.6 1V6" stroke="#e0e0e0" stroke-width="0.8"/><path d="M0 6.5H8M4 6.5V11" fill="none" stroke="#e0e0e0" stroke-width="1.1"/></svg>
<svg style="left:1348px;top:79px" width="10" height="9" viewBox="0 0 10 9"><path d="M0.6 0.5L9.4 8.5M9.4 0.5L0.6 8.5" stroke="#e0e0e0" stroke-width="1.4"/></svg>
<svg style="left:1081px;top:100px" width="17" height="17" viewBox="0 0 17 17"><rect x="7" y="0.5" width="9.5" height="11.5" fill="#1f1f1f" stroke="#d0d0d0"/><path d="M10 3.5H15M10 5.5H15M10 7.5H15M8.5 3.5H9M8.5 5.5H9M8.5 7.5H9" stroke="#d0d0d0"/><path d="M0.5 9.5L2.5 8L5.5 11L9.5 7L10.5 7.5V14.5L9.5 15L5.5 11.8L2.5 14.5L0.5 13.5Z M2.2 10.2V12.8L3.8 11.5Z" fill="#8c5fd8" fill-rule="evenodd"/></svg>
<div class="a" style="left:1104px;top:98px;width:1px;height:20px;background:#3f3f3f;"></div>
<svg style="left:1113px;top:100px" width="15" height="15" viewBox="0 0 15 15"><path d="M0 0H5L3 2.5V5L2 4.5V2.5Z" fill="#4aa8ef"/><circle cx="8.5" cy="9.2" r="5.2" fill="#2a2a2a" stroke="#d0d0d0" stroke-width="1.2"/><path d="M8.5 6V9.5H11" fill="none" stroke="#d0d0d0" stroke-width="1.1"/></svg>
<svg style="left:1135px;top:107px" width="6" height="3" viewBox="0 0 6 3"><path d="M0 0H6L3.0 3Z" fill="#d0d0d0"/></svg>
<svg style="left:1148px;top:103px" width="14" height="10" viewBox="0 0 14 10"><path d="M13.5 3.5H1M4.5 0.5L1 3.5M1 6.5H13.5M10 9.5L13.5 6.5" fill="none" stroke="#d8d8d8" stroke-width="1.05"/></svg>
<svg style="left:1170px;top:101px" width="14" height="14" viewBox="0 0 14 14"><path d="M4 2C1.5 3 0.5 5.5 0.7 7.5C1 11 4 13.3 7 13.3C10.5 13.3 13.3 10.5 13.3 7C13.3 4.5 11.5 2 9 1.2" fill="none" stroke="#3ea0f0" stroke-width="1.3"/><path d="M2.5 0.5H5V3" fill="none" stroke="#3ea0f0" stroke-width="1.3"/></svg>
<svg style="left:1192px;top:100px" width="16" height="15" viewBox="0 0 16 15"><path d="M3.5 0.5H15.5V11.5" fill="none" stroke="#d0d0d0"/><rect x="0.5" y="2.5" width="12" height="12" fill="#2a2a2a" stroke="#d0d0d0" stroke-width="1.1"/><path d="M3 8.5H10" stroke="#d0d0d0" stroke-width="1.1"/></svg>
<svg style="left:1214px;top:101px" width="14" height="14" viewBox="0 0 14 14"><rect x="5.5" y="0.5" width="8" height="9" fill="#1f1f1f" stroke="#a0a0a0"/><rect x="0.5" y="2.5" width="8" height="9" fill="#2a2a2a" stroke="#a0a0a0"/><rect x="3.5" y="4.5" width="7" height="9" fill="#333" stroke="#d8d8d8" stroke-width="1.1"/></svg>
<div class="a" style="left:1235px;top:98px;width:1px;height:20px;background:#3f3f3f;"></div>
<svg style="left:1246px;top:105px" width="10" height="6" viewBox="0 0 10 6"><path d="M3 0.5L0.7 3L3 5.5M7 0.5L9.3 3L7 5.5" fill="none" stroke="#d0d0d0" stroke-width="1.1"/></svg>
<svg style="left:1266px;top:101px" width="15" height="14" viewBox="0 0 15 14"><path d="M1 13L7 7" stroke="#d0d0d0" stroke-width="2.4" stroke-linecap="round"/><path d="M6.5 7.5C5.5 5 6.5 1.5 10 1C11 1 12 1.2 12 1.2L9.8 3.5L11 5L13 3C13.5 4 14 5 13.5 6.5C12.5 9 9.5 9.5 7.5 8.5" fill="#d0d0d0" stroke="#d0d0d0" stroke-width="1"/></svg>
<svg style="left:1287px;top:103px" width="17" height="9" viewBox="0 0 17 9"><path d="M0 7.5H9.5M2.5 7.5V4.5H9.5V7.5" fill="none" stroke="#d8d8d8" stroke-width="1.2"/><path d="M11 0V2M13.5 1.5L12.5 3M13 5H15" stroke="#e8c46a" stroke-width="1"/></svg>
<div class="a" style="left:1077px;top:122px;width:285px;height:21px;background:#333333;"></div>
<div class="t" style="left:1082px;top:125px;letter-spacing:-0.1px">Prohledat: Průzkumník řešení (Ctrl+ů)</div>
<svg style="left:1334px;top:126px" width="13" height="13" viewBox="0 0 13 13"><circle cx="8.5" cy="4.5" r="3.9" fill="none" stroke="#d0d0d0" stroke-width="1.8"/><path d="M5.6 7.4L1.2 11.8" stroke="#d0d0d0" stroke-width="2.2" stroke-linecap="round"/></svg>
<svg style="left:1352px;top:131px" width="6" height="3" viewBox="0 0 6 3"><path d="M0 0H6L3.0 3Z" fill="#d0d0d0"/></svg>
<svg style="left:1090px;top:148px" width="15" height="14" viewBox="0 0 15 14"><path d="M0.6 3.5V12.6H3.8" fill="none" stroke="#d0d0d0" stroke-width="1.1"/><rect x="0.6" y="0.6" width="13.4" height="3" fill="#1f1f1f" stroke="#d0d0d0" stroke-width="1.2"/><path d="M13.4 3.6V5" stroke="#d0d0d0" stroke-width="1.1"/><path d="M5 7.8L6.6 6.6L9.5 9.2L13.1 5.2L14.2 5.8V13.2L13.1 13.8L9.5 10.4L6.6 12.4L5 11.4Z M6.4 8.4V10.6L8.0 9.5Z M12.1 7.6V11.6L10.3 9.6Z" fill="#8553d6" fill-rule="evenodd"/></svg>
<div class="t" style="left:1110px;top:147px;width:237px;clip-path:inset(-5px 0 -5px 0)">Řešení WindowsFormsApp2 (1 z celkového počtu 1 projektu)</div>
<svg style="left:1086px;top:171px" width="6" height="6" viewBox="0 0 6 6"><path d="M6 0V6H0Z" fill="#d8d8d8"/></svg>
<svg style="left:1108px;top:168px" width="14" height="12" viewBox="0 0 14 12"><rect x="0.6" y="0.6" width="12.8" height="10.8" fill="#262626" stroke="#c8c8c8" stroke-width="1.2"/><path d="M6 3.2C5.5 2.8 5 2.6 4.4 2.6C3 2.6 2.2 4 2.2 6C2.2 8 3 9.4 4.4 9.4C5 9.4 5.5 9.2 6 8.8" fill="none" stroke="#5cc85c" stroke-width="1.2"/><path d="M8.3 3V8.8M10.5 3V8.8M7.3 4.8H11.6M7.3 7H11.6" stroke="#5cc85c" stroke-width="1"/></svg>
<div class="t" style="left:1128px;top:166px;font-weight:bold;letter-spacing:-0.35px">WindowsFormsApp2</div>
<svg style="left:1104px;top:188px" width="6" height="9" viewBox="0 0 6 9"><path d="M0.8 0.8L5.4 4.5L0.8 8.2Z" fill="none" stroke="#d8d8d8" stroke-width="1.1"/></svg>
<svg style="left:1126px;top:186px" width="15" height="14" viewBox="0 0 15 14"><path d="M1.5 12.8L7.2 7.2" stroke="#d0d0d0" stroke-width="3" stroke-linecap="round"/><path d="M1.5 12.8L7.2 7.2" stroke="#1f1f1f" stroke-width="0.9" stroke-linecap="round"/><circle cx="9.8" cy="4.4" r="3.2" fill="none" stroke="#d0d0d0" stroke-width="2.2"/><path d="M10.3 3.9L13.8 0.4" stroke="#1f1f1f" stroke-width="1.8"/></svg>
<div class="t" style="left:1146px;top:185px">Properties</div>
<svg style="left:1104px;top:207px" width="6" height="9" viewBox="0 0 6 9"><path d="M0.8 0.8L5.4 4.5L0.8 8.2Z" fill="none" stroke="#d8d8d8" stroke-width="1.1"/></svg>
<svg style="left:1125px;top:206px" width="16" height="10" viewBox="0 0 16 10"><path d="M4 7.5H8.5M6 3H11" stroke="#8a8a8a" stroke-width="1.2"/><rect x="0.6" y="5.6" width="3.4" height="3.4" fill="#1f1f1f" stroke="#e0e0e0" stroke-width="1.1"/><rect x="3.1" y="2.1" width="2.9" height="2.9" fill="#1f1f1f" stroke="#e0e0e0" stroke-width="1.1"/><rect x="11.1" y="0.6" width="4.4" height="4.4" fill="#1f1f1f" stroke="#e0e0e0" stroke-width="1.1"/><rect x="8.6" y="4.6" width="5" height="4.9" fill="#1f1f1f" stroke="#e0e0e0" stroke-width="1.1"/></svg>
<div class="t" style="left:1146px;top:204px">Odkazy</div>
<svg style="left:1125px;top:224px" width="15" height="15" viewBox="0 0 15 15"><path d="M2.6 7V0.6H10.2L13.6 4V13.6H8" fill="#2d2d2d" stroke="#c8c8c8" stroke-width="1.1"/><path d="M10.2 0.6V4H13.6" fill="#6a6a6a"/><path d="M4.5 10.5L8 14" stroke="#d0d0d0" stroke-width="2.4" stroke-linecap="round"/><circle cx="3.3" cy="9.3" r="2.4" fill="none" stroke="#d0d0d0" stroke-width="1.8"/><path d="M2.8 8.8L0 6" stroke="#1f1f1f" stroke-width="1.5"/></svg>
<div class="t" style="left:1146px;top:223px">App.config</div>
<div class="a" style="left:1075px;top:240px;width:272px;height:19px;background:#383838;"></div>
<svg style="left:1104px;top:247px" width="6" height="6" viewBox="0 0 6 6"><path d="M6 0V6H0Z" fill="#d8d8d8"/></svg>
<svg style="left:1126px;top:243px" width="14" height="13" viewBox="0 0 14 13"><rect x="0.5" y="0.5" width="13" height="12" fill="none" stroke="#c8c8c8" stroke-width="1"/><path d="M0.5 3H13.5" stroke="#c8c8c8"/><rect x="2.5" y="7.5" width="3.5" height="2.5" fill="none" stroke="#a478e8"/><rect x="8" y="5.5" width="3" height="2.5" fill="none" stroke="#a478e8"/></svg>
<div class="t" style="left:1146px;top:242px">Form1.cs</div>
<svg style="left:1122px;top:265px" width="6" height="9" viewBox="0 0 6 9"><path d="M0.8 0.8L5.4 4.5L0.8 8.2Z" fill="none" stroke="#d8d8d8" stroke-width="1.1"/></svg>
<svg style="left:1143px;top:262px" width="14" height="14" viewBox="0 0 14 14"><path d="M3.6 1.8H9L12.6 5.4V13.6H3.6Z" fill="#2d2d2d" stroke="#c8c8c8" stroke-width="1.05"/><path d="M9 1.8V5.4H12.6Z" fill="#7a7a7a"/><path d="M0.2 1.3H5.4M3.8 -0.2L5.4 1.3L3.8 2.8" fill="none" stroke="#4aa8ef" stroke-width="1.1"/></svg>
<div class="t" style="left:1164px;top:261px">Form1.Designer.cs</div>
<svg style="left:1143px;top:281px" width="14" height="14" viewBox="0 0 14 14"><path d="M3.6 1.8H9L12.6 5.4V13.6H3.6Z" fill="#2d2d2d" stroke="#c8c8c8" stroke-width="1.05"/><path d="M9 1.8V5.4H12.6Z" fill="#7a7a7a"/><path d="M0.2 1.3H5.4M3.8 -0.2L5.4 1.3L3.8 2.8" fill="none" stroke="#4aa8ef" stroke-width="1.1"/></svg>
<div class="t" style="left:1164px;top:280px">Form1.resx</div>
<div class="a" style="left:1347px;top:144px;width:17px;height:157px;background:#2b2b2b;"></div>
<svg style="left:1351px;top:154px" width="9" height="5" viewBox="0 0 9 5"><path d="M0 5H9L4.5 0Z" fill="#8a8a8a"/></svg>
<div class="a" style="left:1351px;top:162px;width:9px;height:108px;background:#4d4d4d;"></div>
<svg style="left:1351px;top:291px" width="9" height="5" viewBox="0 0 9 5"><path d="M0 0H9L4.5 5Z" fill="#8a8a8a"/></svg>
<div class="a" style="left:1075px;top:301px;width:289px;height:17px;background:#2b2b2b;"></div>
<svg style="left:1081px;top:305px" width="5" height="9" viewBox="0 0 5 9"><path d="M5 0V9L0 4.5Z" fill="#8a8a8a"/></svg>
<div class="a" style="left:1092px;top:305px;width:182px;height:9px;background:#4d4d4d;"></div>
<svg style="left:1336px;top:305px" width="5" height="9" viewBox="0 0 5 9"><path d="M0 0V9L5 4.5Z" fill="#8a8a8a"/></svg>
<div class="a" style="left:1347px;top:301px;width:17px;height:17px;background:#464646;"></div>
<div class="t" style="left:1080px;top:320px;letter-spacing:-0.2px">Průzkumník řešení</div>
<div class="a" style="left:1182px;top:318px;width:1px;height:16px;background:#3a3a3a;"></div>
<div class="a" style="left:1182px;top:318px;width:182px;height:1px;background:#3a3a3a;"></div>
<div class="t" style="left:1189px;top:320px;color:#a8a8a8">Změny Git</div>
<div class="a" style="left:1076px;top:346px;width:288px;height:290px;background:#1f1f1f;"></div>
<div class="a" style="left:1076px;top:346px;width:288px;height:2px;background:#7264e6;"></div>
<div class="t" style="left:1079px;top:349px">Vlastnosti</div>
<svg style="left:1138px;top:354px" width="172" height="6" viewBox="0 0 172 6"><rect x="0" y="0" width="1" height="1" fill="#4a4a4a"/><rect x="4" y="0" width="1" height="1" fill="#4a4a4a"/><rect x="8" y="0" width="1" height="1" fill="#4a4a4a"/><rect x="12" y="0" width="1" height="1" fill="#4a4a4a"/><rect x="16" y="0" width="1" height="1" fill="#4a4a4a"/><rect x="20" y="0" width="1" height="1" fill="#4a4a4a"/><rect x="24" y="0" width="1" height="1" fill="#4a4a4a"/><rect x="28" y="0" width="1" height="1" fill="#4a4a4a"/><rect x="32" y="0" width="1" height="1" fill="#4a4a4a"/><rect x="36" y="0" width="1" height="1" fill="#4a4a4a"/><rect x="40" y="0" width="1" height="1" fill="#4a4a4a"/><rect x="44" y="0" width="1" height="1" fill="#4a4a4a"/><rect x="48" y="0" width="1" height="1" fill="#4a4a4a"/><rect x="52" y="0" width="1" height="1" fill="#4a4a4a"/><rect x="56" y="0" width="1" height="1" fill="#4a4a4a"/><rect x="60" y="0" width="1" height="1" fill="#4a4a4a"/><rect x="64" y="0" width="1" height="1" fill="#4a4a4a"/><rect x="68" y="0" width="1" height="1" fill="#4a4a4a"/><rect x="72" y="0" width="1" height="1" fill="#4a4a4a"/><rect x="76" y="0" width="1" height="1" fill="#4a4a4a"/><rect x="80" y="0" width="1" height="1" fill="#4a4a4a"/><rect x="84" y="0" width="1" height="1" fill="#4a4a4a"/><rect x="88" y="0" width="1" height="1" fill="#4a4a4a"/><rect x="92" y="0" width="1" height="1" fill="#4a4a4a"/><rect x="96" y="0" width="1" height="1" fill="#4a4a4a"/><rect x="100" y="0" width="1" height="1" fill="#4a4a4a"/><rect x="104" y="0" width="1" height="1" fill="#4a4a4a"/><rect x="108" y="0" width="1" height="1" fill="#4a4a4a"/><rect x="112" y="0" width="1" height="1" fill="#4a4a4a"/><rect x="116" y="0" width="1" height="1" fill="#4a4a4a"/><rect x="120" y="0" width="1" height="1" fill="#4a4a4a"/><rect x="124" y="0" width="1" height="1" fill="#4a4a4a"/><rect x="128" y="0" width="1" height="1" fill="#4a4a4a"/><rect x="132" y="0" width="1" height="1" fill="#4a4a4a"/><rect x="136" y="0" width="1" height="1" fill="#4a4a4a"/><rect x="140" y="0" width="1" height="1" fill="#4a4a4a"/><rect x="144" y="0" width="1" height="1" fill="#4a4a4a"/><rect x="148" y="0" width="1" height="1" fill="#4a4a4a"/><rect x="152" y="0" width="1" height="1" fill="#4a4a4a"/><rect x="156" y="0" width="1" height="1" fill="#4a4a4a"/><rect x="160" y="0" width="1" height="1" fill="#4a4a4a"/><rect x="164" y="0" width="1" height="1" fill="#4a4a4a"/><rect x="168" y="0" width="1" height="1" fill="#4a4a4a"/><rect x="2" y="2" width="1" height="1" fill="#4a4a4a"/><rect x="6" y="2" width="1" height="1" fill="#4a4a4a"/><rect x="10" y="2" width="1" height="1" fill="#4a4a4a"/><rect x="14" y="2" width="1" height="1" fill="#4a4a4a"/><rect x="18" y="2" width="1" height="1" fill="#4a4a4a"/><rect x="22" y="2" width="1" height="1" fill="#4a4a4a"/><rect x="26" y="2" width="1" height="1" fill="#4a4a4a"/><rect x="30" y="2" width="1" height="1" fill="#4a4a4a"/><rect x="34" y="2" width="1" height="1" fill="#4a4a4a"/><rect x="38" y="2" width="1" height="1" fill="#4a4a4a"/><rect x="42" y="2" width="1" height="1" fill="#4a4a4a"/><rect x="46" y="2" width="1" height="1" fill="#4a4a4a"/><rect x="50" y="2" width="1" height="1" fill="#4a4a4a"/><rect x="54" y="2" width="1" height="1" fill="#4a4a4a"/><rect x="58" y="2" width="1" height="1" fill="#4a4a4a"/><rect x="62" y="2" width="1" height="1" fill="#4a4a4a"/><rect x="66" y="2" width="1" height="1" fill="#4a4a4a"/><rect x="70" y="2" width="1" height="1" fill="#4a4a4a"/><rect x="74" y="2" width="1" height="1" fill="#4a4a4a"/><rect x="78" y="2" width="1" height="1" fill="#4a4a4a"/><rect x="82" y="2" width="1" height="1" fill="#4a4a4a"/><rect x="86" y="2" width="1" height="1" fill="#4a4a4a"/><rect x="90" y="2" width="1" height="1" fill="#4a4a4a"/><rect x="94" y="2" width="1" height="1" fill="#4a4a4a"/><rect x="98" y="2" width="1" height="1" fill="#4a4a4a"/><rect x="102" y="2" width="1" height="1" fill="#4a4a4a"/><rect x="106" y="2" width="1" height="1" fill="#4a4a4a"/><rect x="110" y="2" width="1" height="1" fill="#4a4a4a"/><rect x="114" y="2" width="1" height="1" fill="#4a4a4a"/><rect x="118" y="2" width="1" height="1" fill="#4a4a4a"/><rect x="122" y="2" width="1" height="1" fill="#4a4a4a"/><rect x="126" y="2" width="1" height="1" fill="#4a4a4a"/><rect x="130" y="2" width="1" height="1" fill="#4a4a4a"/><rect x="134" y="2" width="1" height="1" fill="#4a4a4a"/><rect x="138" y="2" width="1" height="1" fill="#4a4a4a"/><rect x="142" y="2" width="1" height="1" fill="#4a4a4a"/><rect x="146" y="2" width="1" height="1" fill="#4a4a4a"/><rect x="150" y="2" width="1" height="1" fill="#4a4a4a"/><rect x="154" y="2" width="1" height="1" fill="#4a4a4a"/><rect x="158" y="2" width="1" height="1" fill="#4a4a4a"/><rect x="162" y="2" width="1" height="1" fill="#4a4a4a"/><rect x="166" y="2" width="1" height="1" fill="#4a4a4a"/><rect x="170" y="2" width="1" height="1" fill="#4a4a4a"/><rect x="0" y="4" width="1" height="1" fill="#4a4a4a"/><rect x="4" y="4" width="1" height="1" fill="#4a4a4a"/><rect x="8" y="4" width="1" height="1" fill="#4a4a4a"/><rect x="12" y="4" width="1" height="1" fill="#4a4a4a"/><rect x="16" y="4" width="1" height="1" fill="#4a4a4a"/><rect x="20" y="4" width="1" height="1" fill="#4a4a4a"/><rect x="24" y="4" width="1" height="1" fill="#4a4a4a"/><rect x="28" y="4" width="1" height="1" fill="#4a4a4a"/><rect x="32" y="4" width="1" height="1" fill="#4a4a4a"/><rect x="36" y="4" width="1" height="1" fill="#4a4a4a"/><rect x="40" y="4" width="1" height="1" fill="#4a4a4a"/><rect x="44" y="4" width="1" height="1" fill="#4a4a4a"/><rect x="48" y="4" width="1" height="1" fill="#4a4a4a"/><rect x="52" y="4" width="1" height="1" fill="#4a4a4a"/><rect x="56" y="4" width="1" height="1" fill="#4a4a4a"/><rect x="60" y="4" width="1" height="1" fill="#4a4a4a"/><rect x="64" y="4" width="1" height="1" fill="#4a4a4a"/><rect x="68" y="4" width="1" height="1" fill="#4a4a4a"/><rect x="72" y="4" width="1" height="1" fill="#4a4a4a"/><rect x="76" y="4" width="1" height="1" fill="#4a4a4a"/><rect x="80" y="4" width="1" height="1" fill="#4a4a4a"/><rect x="84" y="4" width="1" height="1" fill="#4a4a4a"/><rect x="88" y="4" width="1" height="1" fill="#4a4a4a"/><rect x="92" y="4" width="1" height="1" fill="#4a4a4a"/><rect x="96" y="4" width="1" height="1" fill="#4a4a4a"/><rect x="100" y="4" width="1" height="1" fill="#4a4a4a"/><rect x="104" y="4" width="1" height="1" fill="#4a4a4a"/><rect x="108" y="4" width="1" height="1" fill="#4a4a4a"/><rect x="112" y="4" width="1" height="1" fill="#4a4a4a"/><rect x="116" y="4" width="1" height="1" fill="#4a4a4a"/><rect x="120" y="4" width="1" height="1" fill="#4a4a4a"/><rect x="124" y="4" width="1" height="1" fill="#4a4a4a"/><rect x="128" y="4" width="1" height="1" fill="#4a4a4a"/><rect x="132" y="4" width="1" height="1" fill="#4a4a4a"/><rect x="136" y="4" width="1" height="1" fill="#4a4a4a"/><rect x="140" y="4" width="1" height="1" fill="#4a4a4a"/><rect x="144" y="4" width="1" height="1" fill="#4a4a4a"/><rect x="148" y="4" width="1" height="1" fill="#4a4a4a"/><rect x="152" y="4" width="1" height="1" fill="#4a4a4a"/><rect x="156" y="4" width="1" height="1" fill="#4a4a4a"/><rect x="160" y="4" width="1" height="1" fill="#4a4a4a"/><rect x="164" y="4" width="1" height="1" fill="#4a4a4a"/><rect x="168" y="4" width="1" height="1" fill="#4a4a4a"/></svg>
<svg style="left:1316px;top:354px" width="8" height="4" viewBox="0 0 8 4"><path d="M0 0H8L4.0 4Z" fill="#d0d0d0"/></svg>
<svg style="left:1333px;top:351px" width="8" height="11" viewBox="0 0 8 11"><path d="M2 0.6H6V6.2H2Z" fill="none" stroke="#e0e0e0" stroke-width="1.2"/><path d="M2.6 1V6" stroke="#e0e0e0" stroke-width="0.8"/><path d="M0 6.5H8M4 6.5V11" fill="none" stroke="#e0e0e0" stroke-width="1.1"/></svg>
<svg style="left:1348px;top:352px" width="10" height="9" viewBox="0 0 10 9"><path d="M0.6 0.5L9.4 8.5M9.4 0.5L0.6 8.5" stroke="#e0e0e0" stroke-width="1.4"/></svg>
<div class="a" style="left:1076px;top:367px;width:287px;height:24px;background:#393939;"></div>
<div class="t" style="left:1081px;top:371px;font-weight:bold;letter-spacing:-0.2px">Form1</div>
<div class="t" style="left:1123px;top:371px">System.Windows.Forms.Form</div>
<svg style="left:1354px;top:378px" width="6" height="3" viewBox="0 0 6 3"><path d="M0 0H6L3.0 3Z" fill="#d0d0d0"/></svg>
<div class="a" style="left:1078px;top:393px;width:23px;height:22px;background:#2a2a2a;border:1px solid #7264e6"></div>
<svg style="left:1082px;top:396px" width="15" height="16" viewBox="0 0 15 16"><rect x="0" y="1" width="5" height="5" fill="#d0d0d0"/><rect x="0" y="10" width="5" height="5" fill="#d0d0d0"/><path d="M1 3.5H4M2.5 2V5M1 12.5H4M2.5 11V14" stroke="#1f1f1f" stroke-width="0.9"/><rect x="6" y="1" width="5" height="1" fill="#d0d0d0"/><rect x="6" y="3" width="5" height="1" fill="#d0d0d0"/><rect x="6" y="5" width="5" height="1" fill="#d0d0d0"/><rect x="6" y="7" width="5" height="1" fill="#d0d0d0"/><rect x="6" y="9" width="5" height="1" fill="#d0d0d0"/><rect x="6" y="12" width="5" height="1" fill="#d0d0d0"/><rect x="6" y="14" width="5" height="1" fill="#d0d0d0"/><rect x="12" y="3" width="2" height="1" fill="#d0d0d0"/><rect x="12" y="5" width="2" height="1" fill="#d0d0d0"/><rect x="12" y="7" width="2" height="1" fill="#d0d0d0"/><rect x="12" y="9" width="2" height="1" fill="#d0d0d0"/><rect x="12" y="14" width="2" height="1" fill="#d0d0d0"/></svg>
<svg style="left:1105px;top:397px" width="15" height="15" viewBox="0 0 15 15"><rect x="0" y="0" width="7" height="7" fill="#d0d0d0"/><path d="M1.4 6.2L3.5 1L5.6 6.2M2.3 4.4H4.7" fill="none" stroke="#1f1f1f" stroke-width="1"/><path d="M1.2 9.6H5.8L1.4 13.4H6" fill="none" stroke="#d0d0d0" stroke-width="1.6"/><path d="M11 3V9" stroke="#5cc8f5" stroke-width="2"/><path d="M8 8L11 12L14 8Z" fill="#5cc8f5"/></svg>
<div class="a" style="left:1127px;top:395px;width:1px;height:20px;background:#3f3f3f;"></div>
<div class="a" style="left:1130px;top:393px;width:23px;height:22px;background:#2a2a2a;border:1px solid #7264e6"></div>
<svg style="left:1133px;top:396px" width="16" height="16" viewBox="0 0 16 16"><path d="M4.5 0.6H10L14 4.6V14.4H5.6" fill="none" stroke="#c8c8c8" stroke-width="1.1"/><path d="M4.5 0.6V3.5" stroke="#c8c8c8" stroke-width="1.1"/><path d="M10 0.6V4.6H14" fill="#5a5a5a"/><path d="M10.8 0.2L14.6 4" stroke="#f0f0f0" stroke-width="0.9" stroke-dasharray="1 1"/><path d="M3.2 9V14.4" stroke="#c8c8c8" stroke-width="2.2"/><path d="M0.6 5C0.6 7.8 1.6 9.6 3.2 9.6S5.8 7.8 5.8 5L4.6 6.4H1.8Z" fill="#c8c8c8"/><path d="M0.2 5.2L1 3.8M5.4 3.8L6.2 5.2M0.4 10.5L1.2 11.5" stroke="#f0f0f0" stroke-width="0.8"/></svg>
<svg style="left:1157px;top:396px" width="14" height="17" viewBox="0 0 14 17"><path d="M4.6 0.8H12.6L8.4 7.4H11.8L4.2 15.8L5.8 9.2H2.2Z" fill="#f3c48e"/><path d="M4.4 0.6L1.2 8.6M5.6 9.4L3.6 15.6M12.6 7.2L4.6 16.2M12.8 0.8L9.6 5.6" fill="none" stroke="#f4f4f4" stroke-width="1" stroke-dasharray="1.2 0.9"/></svg>
<div class="a" style="left:1179px;top:395px;width:1px;height:20px;background:#3f3f3f;"></div>
<svg style="left:1185px;top:396px" width="17" height="17" viewBox="0 0 17 17"><path d="M2.2 14.8L8.6 8.4" stroke="#7c7c7c" stroke-width="3.8" stroke-linecap="round"/><path d="M9.2 1.2L12.8 1.2L15.6 4L15.6 7.6L12.8 10.4L9.2 10.4L6.4 7.6L6.4 4Z" fill="#7c7c7c"/><path d="M10.6 5.6L13.2 3" stroke="#5c5c5c" stroke-width="1.8"/></svg>
<div class="a" style="left:1076px;top:418px;width:288px;height:157px;background:#2d2d2d;"></div>
<div class="a" style="left:1090px;top:419px;width:106px;height:18px;background:#1f1f1f;"></div>
<div class="a" style="left:1197px;top:419px;width:149px;height:18px;background:#1f1f1f;"></div>
<svg style="left:1078px;top:423px" width="9" height="9" viewBox="0 0 9 9"><rect x="0.5" y="0.5" width="8" height="8" fill="#1a1a1a" stroke="#e8e8e8"/><path d="M2 4.5H7" stroke="#e8e8e8"/><path d="M4.5 2V7" stroke="#e8e8e8"/></svg>
<div class="t" style="left:1094px;top:420px">MinimumSize</div>
<div class="t" style="left:1200px;top:420px;letter-spacing:-0.45px">0; 0</div>
<div class="a" style="left:1090px;top:438px;width:106px;height:18px;background:#1f1f1f;"></div>
<div class="a" style="left:1197px;top:438px;width:149px;height:18px;background:#1f1f1f;"></div>
<svg style="left:1078px;top:442px" width="9" height="9" viewBox="0 0 9 9"><rect x="0.5" y="0.5" width="8" height="8" fill="#1a1a1a" stroke="#e8e8e8"/><path d="M2 4.5H7" stroke="#e8e8e8"/><path d="M4.5 2V7" stroke="#e8e8e8"/></svg>
<div class="t" style="left:1094px;top:439px">Padding</div>
<div class="t" style="left:1200px;top:439px;letter-spacing:-0.45px">0; 0; 0; 0</div>
<div class="a" style="left:1090px;top:457px;width:106px;height:18px;background:#1f1f1f;"></div>
<div class="a" style="left:1197px;top:457px;width:149px;height:18px;background:#1f1f1f;"></div>
<svg style="left:1078px;top:461px" width="9" height="9" viewBox="0 0 9 9"><rect x="0.5" y="0.5" width="8" height="8" fill="#1a1a1a" stroke="#e8e8e8"/><path d="M2 4.5H7" stroke="#e8e8e8"/><path d="M4.5 2V7" stroke="#e8e8e8"/></svg>
<div class="t" style="left:1094px;top:458px">Size</div>
<div class="t" style="left:1200px;top:458px;font-weight:bold;letter-spacing:-0.2px">816; 489</div>
<div class="a" style="left:1090px;top:476px;width:106px;height:18px;background:#1f1f1f;"></div>
<div class="a" style="left:1197px;top:476px;width:149px;height:18px;background:#1f1f1f;"></div>
<div class="t" style="left:1094px;top:477px">StartPosition</div>
<div class="t" style="left:1200px;top:477px">WindowsDefaultLocation</div>
<div class="a" style="left:1090px;top:495px;width:106px;height:18px;background:#1f1f1f;"></div>
<div class="a" style="left:1197px;top:495px;width:149px;height:18px;background:#1f1f1f;"></div>
<div class="t" style="left:1094px;top:496px">WindowState</div>
<div class="t" style="left:1200px;top:496px">Normal</div>
<svg style="left:1078px;top:518px" width="9" height="9" viewBox="0 0 9 9"><rect x="0.5" y="0.5" width="8" height="8" fill="#1a1a1a" stroke="#e8e8e8"/><path d="M2 4.5H7" stroke="#e8e8e8"/></svg>
<div class="t" style="left:1094px;top:515px;font-weight:bold;letter-spacing:-0.2px">Různé</div>
<div class="a" style="left:1090px;top:533px;width:106px;height:18px;background:#1f1f1f;"></div>
<div class="a" style="left:1197px;top:533px;width:149px;height:18px;background:#1f1f1f;"></div>
<div class="t" style="left:1094px;top:534px">AcceptButton</div>
<div class="t" style="left:1200px;top:534px">(žádný)</div>
<div class="a" style="left:1090px;top:552px;width:106px;height:18px;background:#1f1f1f;"></div>
<div class="a" style="left:1197px;top:552px;width:149px;height:18px;background:#1f1f1f;"></div>
<div class="t" style="left:1094px;top:553px">CancelButton</div>
<div class="t" style="left:1200px;top:553px">(žádný)</div>
<div class="a" style="left:1090px;top:571px;width:106px;height:4px;background:#1f1f1f;"></div>
<div class="a" style="left:1197px;top:571px;width:149px;height:4px;background:#1f1f1f;"></div>
<div class="a" style="left:1346px;top:418px;width:18px;height:157px;background:#2d2d2d;"></div>
<svg style="left:1350px;top:424px" width="9" height="5" viewBox="0 0 9 5"><path d="M0 5H9L4.5 0Z" fill="#8a8a8a"/></svg>
<div class="a" style="left:1350px;top:484px;width:9px;height:17px;background:#4d4d4d;"></div>
<svg style="left:1350px;top:564px" width="9" height="5" viewBox="0 0 9 5"><path d="M0 0H9L4.5 5Z" fill="#8a8a8a"/></svg>
<div class="a" style="left:1076px;top:575px;width:288px;height:61px;background:#1f1f1f;"></div>
<div class="a" style="left:1076px;top:575px;width:288px;height:1px;background:#333333;"></div>
<div class="t" style="left:1081px;top:582px;font-weight:bold;letter-spacing:-0.27px">ControlBox</div>
<div class="t" style="left:1081px;top:600px">Určuje, zda má formulář systémovou a řídicí</div>
<div class="t" style="left:1081px;top:615px">nabídku.</div>
<div class="a" style="left:32px;top:645px;width:1333px;height:93px;border:1px solid #3a3a3a"></div>
<div class="t" style="left:37px;top:649px;color:#cfcfcf">Výstup</div>
<svg style="left:1316px;top:654px" width="8" height="4" viewBox="0 0 8 4"><path d="M0 0H8L4.0 4Z" fill="#d0d0d0"/></svg>
<svg style="left:1333px;top:651px" width="8" height="11" viewBox="0 0 8 11"><path d="M2 0.6H6V6.2H2Z" fill="none" stroke="#e0e0e0" stroke-width="1.2"/><path d="M2.6 1V6" stroke="#e0e0e0" stroke-width="0.8"/><path d="M0 6.5H8M4 6.5V11" fill="none" stroke="#e0e0e0" stroke-width="1.1"/></svg>
<svg style="left:1348px;top:652px" width="10" height="9" viewBox="0 0 10 9"><path d="M0.6 0.5L9.4 8.5M9.4 0.5L0.6 8.5" stroke="#e0e0e0" stroke-width="1.4"/></svg>
<div class="t" style="left:40px;top:673px">Zobrazit výstup z:</div>
<div class="a" style="left:138px;top:670px;width:230px;height:20px;background:#333333;"></div>
<svg style="left:358px;top:679px" width="7" height="4" viewBox="0 0 7 4"><path d="M0 0H7L3.5 4Z" fill="#d0d0d0"/></svg>
<div class="a" style="left:374px;top:671px;width:1px;height:18px;background:#3f3f3f;"></div>
<div class="a" style="left:404px;top:671px;width:1px;height:18px;background:#3f3f3f;"></div>
<div class="a" style="left:456px;top:671px;width:1px;height:18px;background:#3f3f3f;"></div>
<div class="a" style="left:486px;top:671px;width:1px;height:18px;background:#3f3f3f;"></div>
<div class="a" style="left:516px;top:671px;width:1px;height:18px;background:#3f3f3f;"></div>
<svg style="left:383px;top:673px" width="15" height="15" viewBox="0 0 15 15"><path d="M0 14.5H15M2 12H13" stroke="#5c5c5c"/><path d="M5 10V3C5 1.5 8 1.5 8 3V6M6 4L8 6L10 4" fill="none" stroke="#5c5c5c"/></svg>
<svg style="left:414px;top:673px" width="13" height="15" viewBox="0 0 13 15"><path d="M0 10.5H13M0 13.5H13M3 2L0.5 4L3 6M0.5 4H7" fill="none" stroke="#5c5c5c"/><path d="M0 8.5H13" stroke="#5c5c5c"/></svg>
<svg style="left:435px;top:673px" width="13" height="15" viewBox="0 0 13 15"><path d="M0 10.5H13M0 13.5H13M10 2L12.5 4L10 6M12.5 4H6" fill="none" stroke="#5c5c5c"/><path d="M0 8.5H13" stroke="#5c5c5c"/></svg>
<svg style="left:465px;top:673px" width="15" height="15" viewBox="0 0 15 15"><path d="M6 2.5H15M6 5.5H15M0 8.5H15M0 11.5H15M0 14.5H15M0.5 1L4 5M4 1L0.5 5" stroke="#5c5c5c"/></svg>
<svg style="left:494px;top:672px" width="15" height="15" viewBox="0 0 15 15"><text x="0" y="6" font-size="7" font-weight="bold" font-family="Liberation Sans" fill="#d8d8d8">ab</text><text x="0" y="13" font-size="7" font-weight="bold" font-family="Liberation Sans" fill="#d8d8d8">c</text><path d="M6 11H13.5V6.5H11M8 9L6 11L8 13" fill="none" stroke="#4aa8ef" stroke-width="1.2"/></svg>
<svg style="left:525px;top:673px" width="15" height="15" viewBox="0 0 15 15"><circle cx="7" cy="7" r="6" fill="none" stroke="#d8d8d8" stroke-width="1.3"/><path d="M7 3.5V7.5H10" fill="none" stroke="#d8d8d8" stroke-width="1.2"/></svg>
<div class="t" style="left:38px;top:739px;color:#c0c0c0">Průzkumník testů</div>
<div class="t" style="left:142px;top:739px;color:#c0c0c0;letter-spacing:-0.25px">Seznam chyb</div>
<div class="a" style="left:218px;top:737px;width:48px;height:21px;border:1px solid #3a3a3a;border-top:none;background:#1f1f1f"></div>
<div class="t" style="left:224px;top:739px">Výstup</div>
<div class="a" style="left:0px;top:764px;width:1372px;height:25px;background:#424242;"></div>
<svg style="left:5px;top:768px" width="17" height="17" viewBox="0 0 17 17"><path d="M0.5 0.5H15.5V12.4H9.6L7.6 15L5.6 12.4H0.5Z" fill="#4c4c4c" stroke="#e0e0e0" stroke-width="1.1"/></svg>
<div class="t" style="left:29px;top:768px">Připraven</div>
<svg style="left:857px;top:769px" width="13" height="13" viewBox="0 0 13 13"><circle cx="6.5" cy="6.5" r="5.7" fill="none" stroke="#e0e0e0" stroke-width="1.3"/><path d="M6.5 3V7H9" fill="none" stroke="#e0e0e0" stroke-width="1.2"/></svg>
<div class="t" style="left:874px;top:768px">30 mins</div>
<svg style="left:955px;top:768px" width="12" height="15" viewBox="0 0 12 15"><path d="M6 15V1M1 6L6 1L11 6" fill="none" stroke="#e0e0e0" stroke-width="1.1"/></svg>
<div class="t" style="left:976px;top:768px">Přidat do správy zdrojového kódu</div>
<svg style="left:1159px;top:773px" width="8" height="5" viewBox="0 0 8 5"><path d="M0 5H8L4 0Z" fill="#e8e8e8"/></svg>
<svg style="left:1190px;top:770px" width="15" height="14" viewBox="0 0 15 14"><rect x="0.6" y="0.6" width="13.4" height="2.8" fill="none" stroke="#e0e0e0" stroke-width="1.1"/><path d="M1.6 3.4V12.9H13V3.4" fill="none" stroke="#e0e0e0" stroke-width="1.1"/><path d="M5.5 5.5V10.8L7.3 9.2L9.1 10.8V5.5" fill="none" stroke="#e0e0e0" stroke-width="1.1"/></svg>
<div class="t" style="left:1211px;top:768px">Vybrat úložiště</div>
<svg style="left:1294px;top:773px" width="8" height="5" viewBox="0 0 8 5"><path d="M0 5H8L4 0Z" fill="#e8e8e8"/></svg>
<svg style="left:1323px;top:769px" width="13" height="14" viewBox="0 0 13 14"><path d="M2 10V5.8C2 3 3.8 0.8 6.3 0.8S10.6 3 10.6 5.8V10L12.2 11.7H0.4Z" fill="#4a4a4a" stroke="#e8e8e8" stroke-width="1.1"/><path d="M4.6 12.5C4.8 13.3 5.5 13.8 6.3 13.8S7.8 13.3 8 12.5" fill="none" stroke="#e8e8e8" stroke-width="1"/></svg>
<div class="a" style="left:1330px;top:775px;width:12px;height:12px;border-radius:6px;background:#f4a0aa"></div>
<div class="a" style="left:1333px;top:774px;font-size:10px;line-height:13px;color:#200818;font-weight:bold">1</div>
<svg style="left:1358px;top:775px" width="9" height="9" viewBox="0 0 9 9"><rect x="0" y="8" width="1" height="1" fill="#9a9a9a"/><rect x="2" y="6" width="1" height="1" fill="#9a9a9a"/><rect x="2" y="8" width="1" height="1" fill="#9a9a9a"/><rect x="4" y="4" width="1" height="1" fill="#9a9a9a"/><rect x="4" y="6" width="1" height="1" fill="#9a9a9a"/><rect x="4" y="8" width="1" height="1" fill="#9a9a9a"/><rect x="6" y="2" width="1" height="1" fill="#9a9a9a"/><rect x="6" y="4" width="1" height="1" fill="#9a9a9a"/><rect x="6" y="6" width="1" height="1" fill="#9a9a9a"/><rect x="6" y="8" width="1" height="1" fill="#9a9a9a"/><rect x="8" y="0" width="1" height="1" fill="#9a9a9a"/><rect x="8" y="2" width="1" height="1" fill="#9a9a9a"/><rect x="8" y="4" width="1" height="1" fill="#9a9a9a"/><rect x="8" y="6" width="1" height="1" fill="#9a9a9a"/><rect x="8" y="8" width="1" height="1" fill="#9a9a9a"/></svg>
</div>
<div id="frame"></div>
<div id="red"></div>
</body></html>
